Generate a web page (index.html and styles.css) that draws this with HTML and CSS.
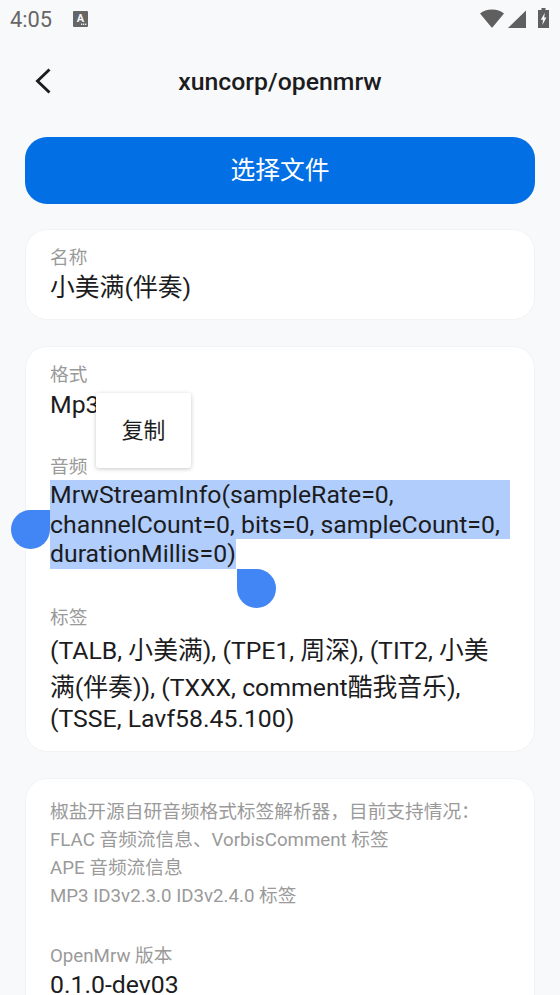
FILE: index.html
```html
<!DOCTYPE html>
<html lang="zh-CN">
<head>
  <meta charset="UTF-8">
  <meta name="viewport" content="width=device-width, initial-scale=1.0">
  <title>xuncorp/openmrw</title>
  <link rel="stylesheet" href="styles.css">
</head>
<body>
  <div class="status-bar">
    <span class="clock">4:05</span>
    <svg class="status-a" viewBox="0 0 15 16" width="15" height="16">
      <rect width="15" height="16" rx="1" fill="#666"/>
      <text x="7.5" y="10.6" text-anchor="middle" class="status-a-letter">A</text>
      <rect x="8" y="12.6" width="1.3" height="1.3" fill="#f8f9fb"/>
      <rect x="10" y="12.6" width="1.3" height="1.3" fill="#f8f9fb"/>
      <rect x="12" y="12.6" width="1.3" height="1.3" fill="#f8f9fb"/>
    </svg>
    <svg class="status-icons" viewBox="0 0 69 20" width="69" height="20">
      <path d="M0 5.5 C3.2 3 7.2 1.5 12 1.5 C16.8 1.5 20.8 3 24 5.5 L12.6 19.2 Q12 19.8 11.4 19.2 Z" fill="#5f5f5f"/>
      <path d="M46 2.5 V20 H28 Z" fill="#5f5f5f"/>
      <path d="M61.5 0 H65.5 V2 H69 V20 H58 V2 H61.5 Z" fill="#5f5f5f"/>
      <path d="M64.8 4.8 L60.8 11.8 H63 L62.4 17 L66.4 9.6 H64.2 Z" fill="#f8f9fb"/>
    </svg>
  </div>

  <header class="top-bar">
    <svg class="back" viewBox="0 0 16 26" width="16" height="26">
      <path d="M14.5 1.5 L2.5 13 L14.5 24.5" fill="none" stroke="#1c1c1e" stroke-width="2.9"/>
    </svg>
    <h1>xuncorp/openmrw</h1>
  </header>

  <button class="pick-btn">选择文件</button>

  <section class="card card-name">
    <div class="label">名称</div>
    <div class="value">小美满(伴奏)</div>
  </section>

  <section class="card card-info">
    <div class="label">格式</div>
    <div class="value value-latin">Mp3</div>

    <div class="label label-audio">音频</div>
    <div class="selection">
      <div class="sel-line">MrwStreamInfo(sampleRate=0,</div>
      <div class="sel-line">channelCount=0, bits=0, sampleCount=0,</div>
      <div class="sel-line sel-last">durationMillis=0)</div>
    </div>

    <div class="label label-tags">标签</div>
    <div class="tags">
      <div class="tag-line">(TALB, 小美满), (TPE1, 周深), (TIT2, 小美</div>
      <div class="tag-line">满(伴奏)), (TXXX, comment酷我音乐),</div>
      <div class="tag-line tag-last">(TSSE, Lavf58.45.100)</div>
    </div>

    <div class="copy-menu">复制</div>
    <div class="handle handle-start"></div>
    <div class="handle handle-end"></div>
  </section>

  <section class="card card-about">
    <p class="about">椒盐开源自研音频格式标签解析器&#xFF0C;目前支持情况&#xFF1A;<br>FLAC 音频流信息、VorbisComment 标签<br>APE 音频流信息<br>MP3 ID3v2.3.0 ID3v2.4.0 标签</p>
    <div class="label label-version">OpenMrw 版本</div>
    <div class="value version-value">0.1.0-dev03</div>
  </section>
</body>
</html>
```

FILE: styles.css
```css
/* General Styling */
html, body {
  height: 995px;
}

body {
  margin: 0;
  overflow: hidden;
  background: #f8f9fb;
  color: #1c1c1e;
  font-family: Roboto, "Noto Sans CJK SC", sans-serif;
}

/* Status bar */
.status-bar {
  display: flex;
  align-items: center;
  height: 38px;
  padding: 0 11px 0 10px;
}

.clock {
  font-size: 21.8px;
  color: #666;
}

.status-a {
  margin-left: 21px;
}

.status-a-letter {
  font-size: 11px;
  font-weight: 700;
  fill: #f8f9fb;
}

.status-icons {
  margin-left: auto;
  margin-bottom: 2px;
}

/* Top bar */
.top-bar {
  position: relative;
  display: flex;
  align-items: center;
  justify-content: center;
  height: 86px;
}

.top-bar h1 {
  margin: 0;
  font-size: 24.8px;
  font-weight: 500;
}

.back {
  position: absolute;
  left: 35px;
  top: 30px;
}

/* Button */
.pick-btn {
  display: block;
  width: 510px;
  height: 67px;
  margin: 13px 25px 25px;
  padding: 0 0 6px;
  border: 0;
  border-radius: 22px;
  background: #026fe4;
  color: #fff;
  font-family: inherit;
  font-size: 24.8px;
}

/* Cards */
.card {
  position: relative;
  margin: 0 25px 26px;
  background: #fff;
  border: 1px solid #f2f3f5;
  border-radius: 22px;
}

.card-name {
  padding: 16px 24px 15px;
}

.card-name .value {
  margin-top: 2px;
}

.card-info {
  padding: 16px 24px 19px;
}

.card-about {
  margin-bottom: 0;
  padding: 19px 24px 0;
  border-bottom: 0;
  border-radius: 22px 22px 0 0;
}

.label {
  font-size: 18.7px;
  line-height: 24px;
  color: #9a9a9a;
}

.label-audio {
  margin-top: 32px;
}

.label-tags {
  margin-top: 37px;
  margin-bottom: 2px;
}

.label-version {
  margin-top: 34px;
}

.value {
  font-size: 24.8px;
  line-height: 32px;
}

.value-latin {
  line-height: 36px;
}

.version-value {
  margin-top: 7px;
  line-height: 20px;
}

.selection {
  margin-top: 1px;
  font-size: 24.8px;
  line-height: 29.67px;
}

.sel-line {
  background: #b0cdfc;
  white-space: nowrap;
}

.sel-last {
  width: fit-content;
}

.tags {
  font-size: 24.8px;
}

.tag-line {
  line-height: 37px;
  white-space: nowrap;
}

.tag-last {
  line-height: 26px;
}

.about {
  margin: 0;
  font-size: 18.7px;
  line-height: 28px;
  color: #9a9a9a;
}

/* Selection popup and handles */
.copy-menu {
  position: absolute;
  left: 70px;
  top: 46px;
  width: 95px;
  height: 75px;
  background: #fff;
  border-radius: 3px;
  box-shadow: 0 1px 4px rgba(0, 0, 0, 0.22);
  font-size: 21.8px;
  line-height: 75px;
  text-align: center;
}

.handle {
  position: absolute;
  width: 39px;
  height: 39px;
  background: #4285f4;
}

.handle-start {
  left: -15px;
  top: 163px;
  border-radius: 50% 0 50% 50%;
}

.handle-end {
  left: 211px;
  top: 222px;
  border-radius: 0 50% 50% 50%;
}
```
